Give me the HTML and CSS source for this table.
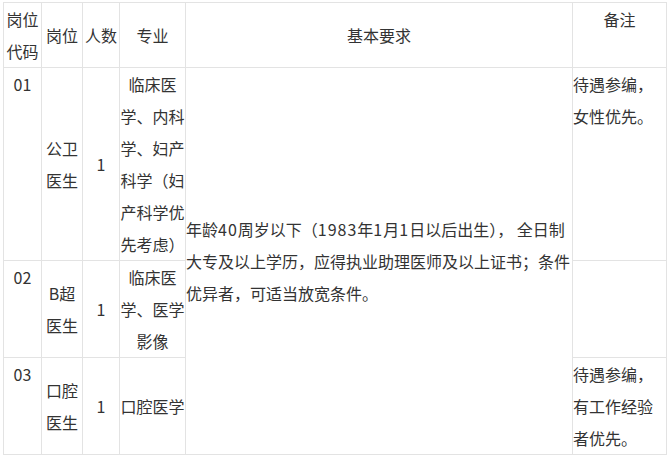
FILE: index.html
```html
<!DOCTYPE html>
<html lang="zh-CN">
<head>
    <meta charset="UTF-8">
    <meta name="viewport" content="width=device-width, initial-scale=1.0">
    <title>招聘岗位</title>
    <link rel="stylesheet" href="styles.css">
</head>
<body>
    <table class="jobs">
        <colgroup>
            <col class="c-code">
            <col class="c-post">
            <col class="c-num">
            <col class="c-major">
            <col class="c-req">
            <col class="c-note">
        </colgroup>
        <tr class="head">
            <td class="center">岗位<br>代码</td>
            <td class="center">岗位</td>
            <td class="center">人数</td>
            <td class="center">专业</td>
            <td class="center">基本要求</td>
            <td class="center top">备注</td>
        </tr>
        <tr>
            <td class="center top">01</td>
            <td class="center">公卫<br>医生</td>
            <td class="center">1</td>
            <td class="center">临床医<br>学、内科<br>学、妇产<br>科学（妇<br>产科学优<br>先考虑）</td>
            <td class="req" rowspan="3">年龄<span class="digits">40</span>周岁以下（<span class="digits">1983</span>年<span class="digits">1</span>月<span class="digits">1</span>日以后出生）， 全日制<br>大专及以上学历，应得执业助理医师及以上证书；条件<br>优异者，可适当放宽条件。</td>
            <td class="top">待遇参编，<br>女性优先。</td>
        </tr>
        <tr>
            <td class="center top">02</td>
            <td class="center">B超<br>医生</td>
            <td class="center">1</td>
            <td class="center">临床医<br>学、医学<br>影像</td>
            <td class="top"></td>
        </tr>
        <tr>
            <td class="center top">03</td>
            <td class="center">口腔<br>医生</td>
            <td class="center">1</td>
            <td class="center">口腔医学</td>
            <td class="top">待遇参编，<br>有工作经验<br>者优先。</td>
        </tr>
    </table>
</body>
</html>
```

FILE: styles.css
```css
body {
    margin: 0;
    background: #fff;
    font-family: "Noto Sans CJK SC", "Noto Sans", sans-serif;
    color: #333;
}

.jobs {
    margin: 2px 0 0 3px;
    border-collapse: collapse;
    table-layout: fixed;
    width: 663px;
    font-size: 16px;
    line-height: 32px;
}

.c-code { width: 38px; }
.c-post { width: 41px; }
.c-num { width: 37px; }
.c-major { width: 66px; }
.c-req { width: 387px; }
.c-note { width: 94px; }

.jobs td {
    border: 1px solid #e3e3e3;
    padding: 0;
    vertical-align: middle;
    white-space: nowrap;
    overflow: hidden;
}

.center {
    text-align: center;
}

.jobs td.top {
    vertical-align: top;
}

.req {
    text-align: left;
}

/* digits in the reference font run a little wider */
.digits {
    letter-spacing: 1px;
}
```
